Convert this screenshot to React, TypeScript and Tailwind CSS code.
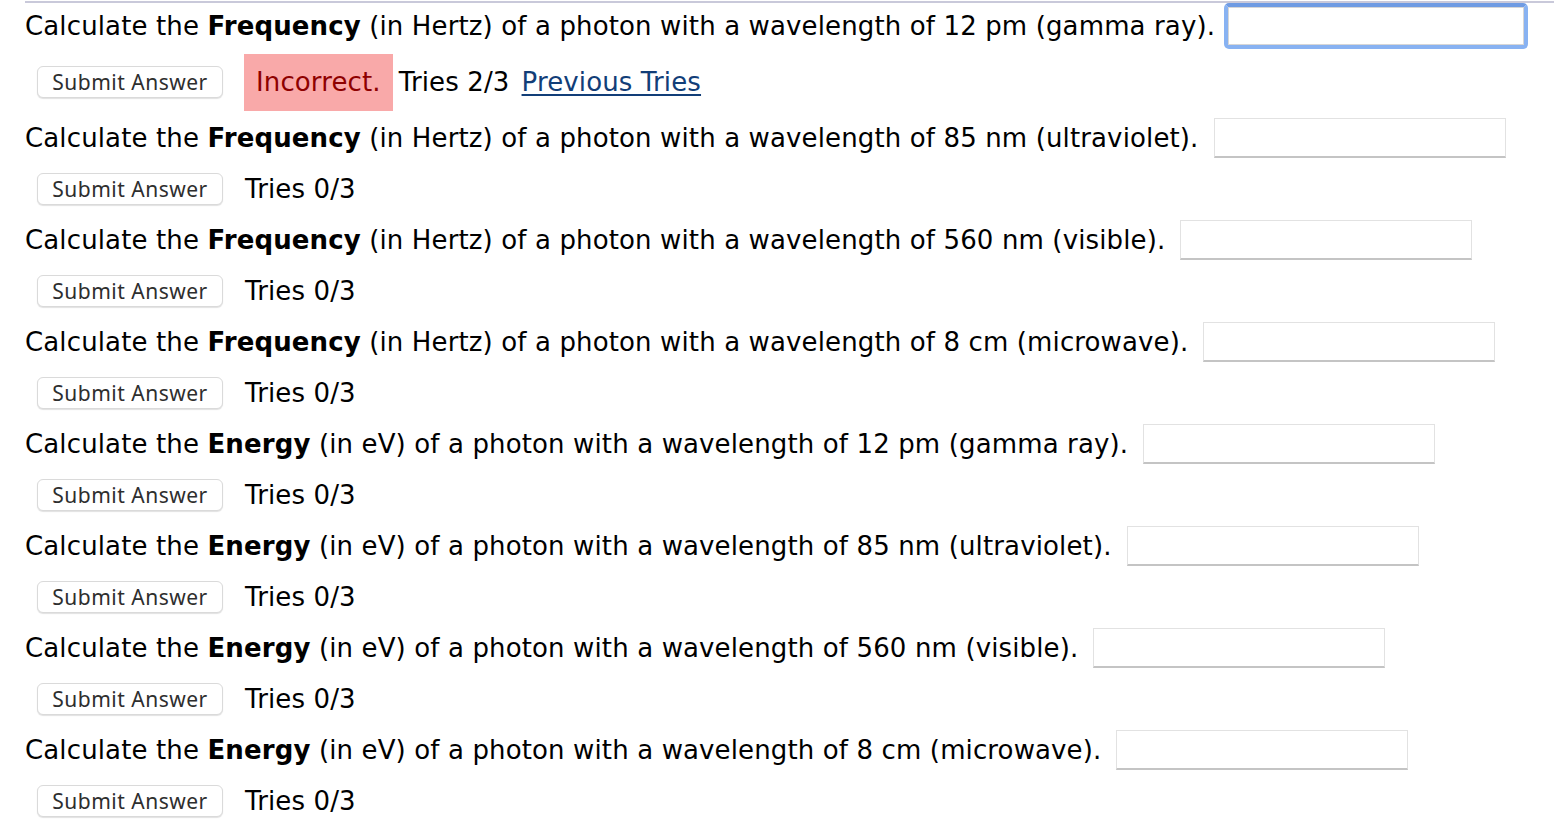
import React from 'react';

type Question = {
  quantity: string;
  unit: string;
  wavelength: string;
  band: string;
};

const questions: Question[] = [
  { quantity: 'Frequency', unit: 'in Hertz', wavelength: '12 pm', band: 'gamma ray' },
  { quantity: 'Frequency', unit: 'in Hertz', wavelength: '85 nm', band: 'ultraviolet' },
  { quantity: 'Frequency', unit: 'in Hertz', wavelength: '560 nm', band: 'visible' },
  { quantity: 'Frequency', unit: 'in Hertz', wavelength: '8 cm', band: 'microwave' },
  { quantity: 'Energy', unit: 'in eV', wavelength: '12 pm', band: 'gamma ray' },
  { quantity: 'Energy', unit: 'in eV', wavelength: '85 nm', band: 'ultraviolet' },
  { quantity: 'Energy', unit: 'in eV', wavelength: '560 nm', band: 'visible' },
  { quantity: 'Energy', unit: 'in eV', wavelength: '8 cm', band: 'microwave' },
];

const SubmitButton: React.FC = () => (
  <button className="h-[32px] w-[186px] shrink-0 rounded-[6px] border border-[#dadada] bg-white text-[21px] tracking-[0.5px] text-[#2e2e2e] shadow-[0_1px_1px_rgba(0,0,0,0.12)] [font-family:'Noto_Sans',Arial,sans-serif]">
    Submit Answer
  </button>
);

const App: React.FC = () => {
  return (
    <div className="min-h-screen bg-white pl-[25px] text-black tracking-[0.13px] [font-family:'DejaVu_Sans',Verdana,sans-serif]">
      <div className="h-[2px] bg-[#c9c9da] mt-[1px] -mb-[3px]" />
      {questions.map((q, i) => (
        <div key={i}>
          <div className="flex h-[52px] items-center text-[26px] whitespace-nowrap">
            <span>
              Calculate the <b>{q.quantity}</b> ({q.unit}) of a photon with a wavelength of {q.wavelength} ({q.band}).
            </span>
            {i === 0 ? (
              <div className="ml-[9px] rounded-[5px] border-[4px] border-[#88b2f2] border-t-[#6f9be3]">
                <input className="block h-[38px] w-[296px] border border-[#d6d6d6] bg-white outline-none" />
              </div>
            ) : (
              <input className="ml-[15px] block h-[40px] w-[292px] border border-[#e2e2e2] border-b-[#c4c4c4] border-b-2 bg-white outline-none" />
            )}
          </div>
          {i === 0 ? (
            <div className="flex h-[60px] items-center pl-[12px] text-[26px]">
              <SubmitButton />
              <span className="ml-[21px] flex h-[57px] items-center bg-[#f9a9a9] px-[12px] text-[#8e0000]">Incorrect.</span>
              <span className="ml-[6px]">Tries 2/3</span>
              <a href="#" className="ml-[12px] text-[#123e78] underline underline-offset-[3px]">Previous Tries</a>
            </div>
          ) : (
            <div className="flex h-[50px] items-center pl-[12px] text-[26px]">
              <SubmitButton />
              <span className="ml-[22px]">Tries 0/3</span>
            </div>
          )}
        </div>
      ))}
    </div>
  );
};

export default App;
